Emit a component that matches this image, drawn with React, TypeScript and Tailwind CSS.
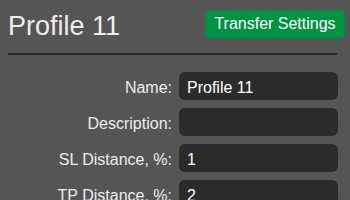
import React from 'react';

const fields = [
    { label: 'Name:', value: 'Profile 11' },
    { label: 'Description:', value: '' },
    { label: 'SL Distance, %:', value: '1' },
    { label: 'TP Distance, %:', value: '2' },
];

export default function App() {
    return (
        <div className="w-[350px] h-[200px] overflow-hidden bg-[#555555] text-[#eeeeee] font-['Liberation_Sans',Arial,sans-serif]">
            <div className="px-2 pt-[10px]">
                <div className="flex items-start justify-between">
                    <h1 className="text-[27px] leading-[30px] mt-[1px]">Profile 11</h1>
                    <button className="bg-[#009344] text-white text-base h-7 w-[140px] rounded-[5px] mr-[-3px]">
                        Transfer Settings
                    </button>
                </div>
                <div className="mt-[12px] mr-[5px] border-t-2 border-[#2a2a2a]" />
            </div>
            <div className="mt-[17px] flex flex-col gap-2">
                {fields.map(f => (
                    <div key={f.label} className="flex items-center">
                        <label className="w-[179px] pr-[7px] pt-[3px] text-right text-base">{f.label}</label>
                        <input
                            type="text"
                            defaultValue={f.value}
                            className="w-[159px] h-7 rounded-md bg-[#2b2b2b] px-2 pt-[3px] text-base text-white outline-none"
                        />
                    </div>
                ))}
            </div>
        </div>
    );
}
